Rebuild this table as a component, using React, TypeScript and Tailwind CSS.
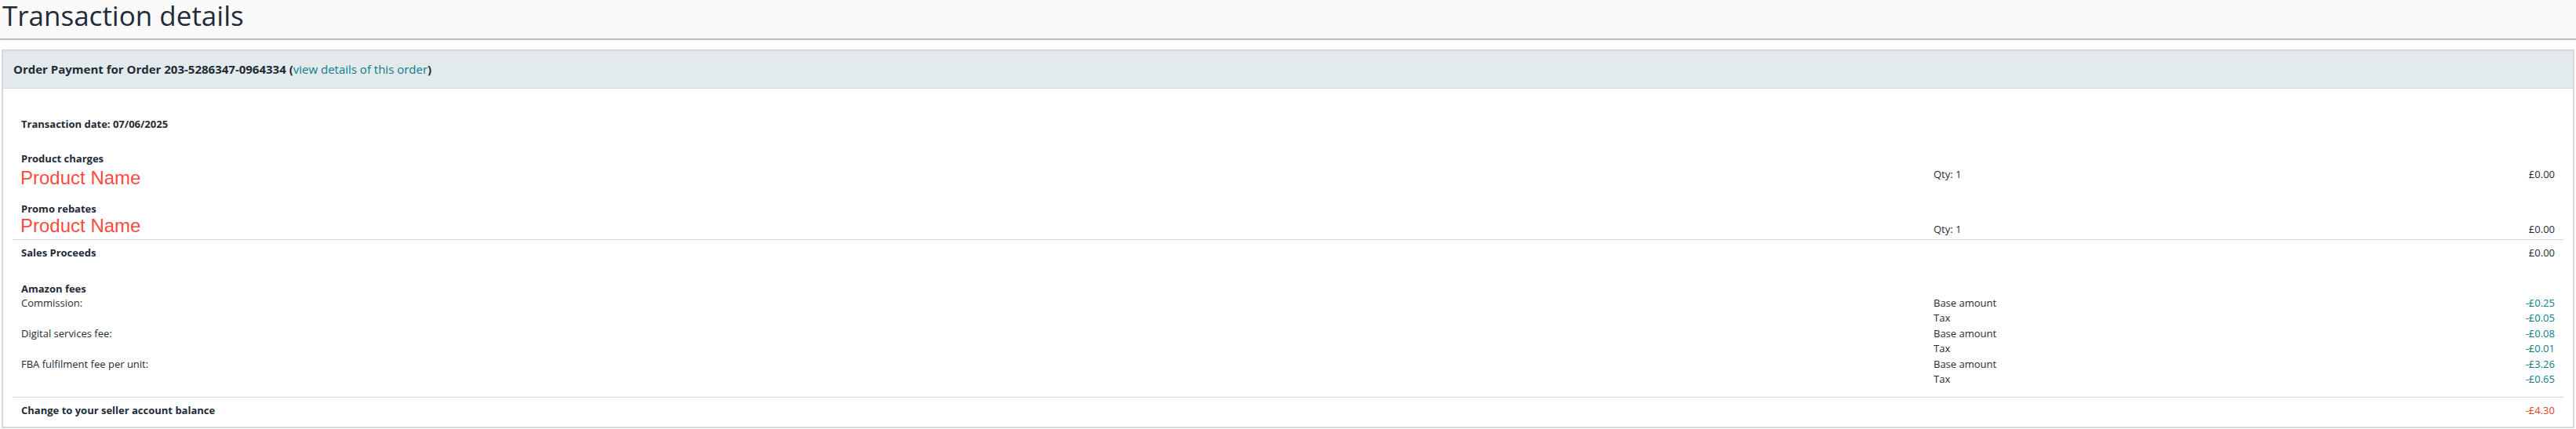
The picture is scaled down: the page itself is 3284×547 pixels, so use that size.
export default function App() {
  const dark = "text-[#1f2b38]";
  return (
    <div className={`bg-white font-['Open_Sans',sans-serif] ${dark}`}>
      <div className="h-[51px] bg-[#fafafa] border-b-2 border-[#bdbdbd] pl-[3px]">
        <h1 className="text-[35px] leading-[40px] font-normal">Transaction details</h1>
      </div>
      <div className="mt-[12px] mx-[2px] border-2 border-[#d5dbdb]">
        <div className="h-[48px] bg-[#e3eaeb] border-b border-[#d5dbdb] pl-[13px] flex items-center text-[15px] leading-[19px] font-bold">
          <span>
            Order Payment for Order 203-5286347-0964334 (
            <span className="font-normal text-[#087e8b]">view details of this order</span>)
          </span>
        </div>
        <div className="px-[12px] pt-[36px] pb-[10px] text-[13px]">
          <div className="px-[11px]">
            <div className="font-bold leading-[19.5px]">Transaction date: 07/06/2025</div>
            <div className="mt-[24px] font-bold leading-[19.5px]">Product charges</div>
            <div className="flex items-start h-[26px]">
              <div className="w-[2438px] shrink-0 -ml-[1px] mt-[4px] text-[24px] leading-[22px] font-['Liberation_Sans',Arial,sans-serif] text-[#fb4b40]">
                Product Name
              </div>
              <div className="flex-1 ml-[1px] mt-[1px] leading-[19.5px]">Qty: 1</div>
              <div className="mt-[1px] leading-[19.5px] text-right">£0.00</div>
            </div>
            <div className="mt-[19px] font-bold leading-[19.5px]">Promo rebates</div>
            <div className="flex items-start h-[25.5px]">
              <div className="w-[2438px] shrink-0 -ml-[1px] text-[24px] leading-[22px] font-['Liberation_Sans',Arial,sans-serif] text-[#fb4b40]">
                Product Name
              </div>
              <div className="flex-1 ml-[1px] mt-[6px] leading-[19.5px]">Qty: 1</div>
              <div className="mt-[6px] leading-[19.5px] text-right">£0.00</div>
            </div>
          </div>
          <div className="mt-[3px] border-t border-[#d5d9d9]" />
          <div className="px-[11px]">
            <div className="mt-[7px] flex leading-[19.5px]">
              <div className="w-[2438px] shrink-0 font-bold">Sales Proceeds</div>
              <div className="flex-1" />
              <div className="text-right">£0.00</div>
            </div>
            <div className="mt-[26.5px] font-bold leading-[18px]">Amazon fees</div>
            {[
              { label: "Commission:", base: "-£0.25", tax: "-£0.05" },
              { label: "Digital services fee:", base: "-£0.08", tax: "-£0.01" },
              { label: "FBA fulfilment fee per unit:", base: "-£3.26", tax: "-£0.65" },
            ].map((f) => (
              <div key={f.label} className="flex leading-[19.4px]">
                <div className="w-[2438px] shrink-0">{f.label}</div>
                <div className="flex-1">
                  <div>Base amount</div>
                  <div>Tax</div>
                </div>
                <div className="text-right text-[#087e8b]">
                  <div>{f.base}</div>
                  <div>{f.tax}</div>
                </div>
              </div>
            ))}
          </div>
          <div className="mt-[12.6px] border-t border-[#d5d9d9]" />
          <div className="px-[11px] mt-[7px] flex leading-[19.5px]">
            <div className="w-[2438px] shrink-0 font-bold">Change to your seller account balance</div>
            <div className="flex-1" />
            <div className="text-right text-[#e2431f]">-£4.30</div>
          </div>
        </div>
      </div>
    </div>
  );
}
